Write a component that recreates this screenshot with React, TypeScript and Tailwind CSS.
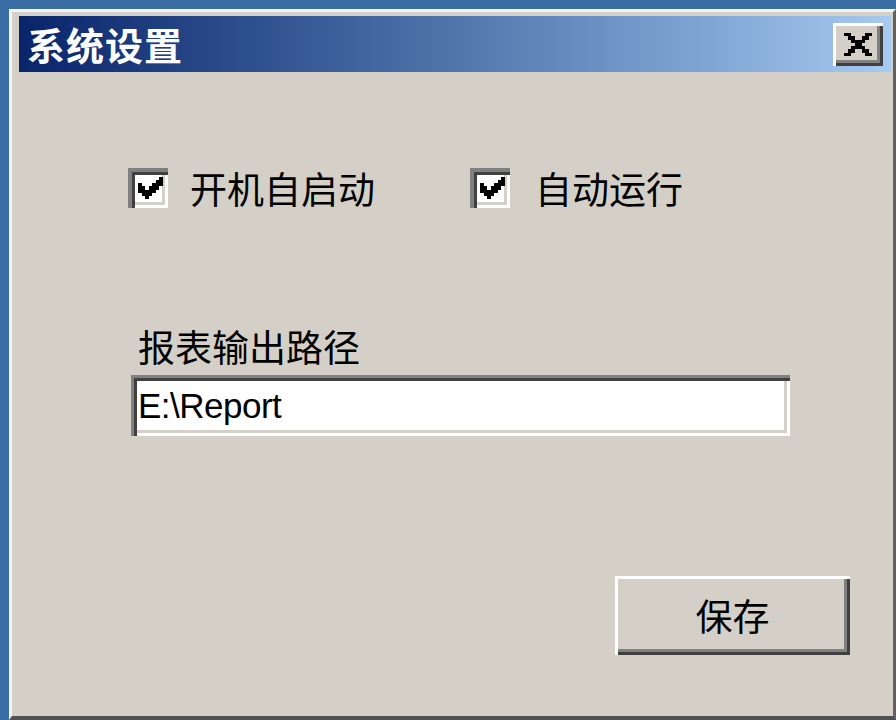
import React from "react";

const CHECK = [
  "......X",
  ".....XX",
  "X...XXX",
  "XX.XXX.",
  "XXXXX..",
  ".XXX...",
  "..X....",
];

const CROSS = [
  "XX....XX",
  ".XX..XX.",
  "..XXXX..",
  "...XX...",
  "..XXXX..",
  ".XX..XX.",
  "XX....XX",
];

function Pixels({ rows, w, h }: { rows: string[]; w: number; h: number }) {
  const cols = rows[0].length;
  return (
    <svg
      width={w}
      height={h}
      viewBox={`0 0 ${cols} ${rows.length}`}
      preserveAspectRatio="none"
      shapeRendering="crispEdges"
    >
      {rows.map((r, y) =>
        r.split("").map((c, x) =>
          c === "X" ? <rect key={`${x}-${y}`} x={x} y={y} width={1} height={1} fill="#000" /> : null
        )
      )}
    </svg>
  );
}

function CheckBox() {
  return (
    <div className="relative w-[40px] h-[40px] bg-white shrink-0 shadow-[inset_4px_4px_0_#808080,inset_7px_7px_0_#404040,inset_-3px_-3px_0_#ffffff,inset_-6px_-6px_0_#d4d0c8]">
      <div className="absolute left-[10px] top-[9px]">
        <Pixels rows={CHECK} w={25} h={22} />
      </div>
    </div>
  );
}

const cjk = { fontFamily: '"Noto Sans CJK SC", "Noto Sans", sans-serif' };

export default function App() {
  return (
    <div className="w-[896px] h-[720px] bg-[#3a6ea5] pl-[9px] pt-[9px] flex overflow-hidden">
      <div className="flex-1 flex flex-col bg-[#d4d0c8] border-t-[3px] border-l-[3px] border-t-[#f4f3ef] border-l-[#f4f3ef] border-r-[3px] border-b-[4px] border-r-[#606060] border-b-[#505050] pt-[4px] pl-[7px] pr-[2px]">
        {/* Title bar */}
        <div className="h-[56px] flex items-center justify-between pl-[8px] pr-[8px] bg-gradient-to-r from-[#0a246a] to-[#a6caf0]">
          <span className="text-white font-bold text-[38px] leading-none tracking-[1px]" style={cjk}>
            系统设置
          </span>
          <div className="w-[50px] h-[43px] bg-[#d4d0c8] flex items-center justify-center shadow-[inset_3px_3px_0_#ffffff,inset_-3px_-3px_0_#404040,inset_-6px_-6px_0_#808080]">
            <Pixels rows={CROSS} w={28} h={23} />
          </div>
        </div>

        {/* Content */}
        <div className="flex-1 flex flex-col" style={cjk}>
          <div className="mt-[96px] ml-[109px] flex items-center h-[40px]">
            <div className="w-[342px] flex items-center gap-[22px]">
              <CheckBox />
              <span className="text-[37px] leading-none text-black">开机自启动</span>
            </div>
            <div className="flex items-center gap-[25px]">
              <CheckBox />
              <span className="text-[37px] leading-none text-black">自动运行</span>
            </div>
          </div>

          <div className="mt-[120px] ml-[119px] text-[37px] leading-[37px] text-black">报表输出路径</div>

          <div className="mt-[10px] ml-[112px] w-[659px] h-[61px] bg-white flex items-center pl-[7px] shadow-[inset_3px_3px_0_#808080,inset_6px_6px_0_#404040,inset_-3px_-3px_0_#ffffff,inset_-6px_-6px_0_#d4d0c8]">
            <span className="text-[35px] leading-none text-black tracking-[-0.5px]" style={{ fontFamily: '"Liberation Sans", Arial, sans-serif' }}>
              E:\Report
            </span>
          </div>

          <div className="mt-[140px] ml-[596px] w-[235px] h-[79px] bg-[#d4d0c8] flex items-center justify-center shadow-[inset_3px_3px_0_#ffffff,inset_-3px_-3px_0_#404040,inset_-6px_-6px_0_#808080]">
            <span className="text-[37px] leading-none text-black">保存</span>
          </div>
        </div>
      </div>
    </div>
  );
}
